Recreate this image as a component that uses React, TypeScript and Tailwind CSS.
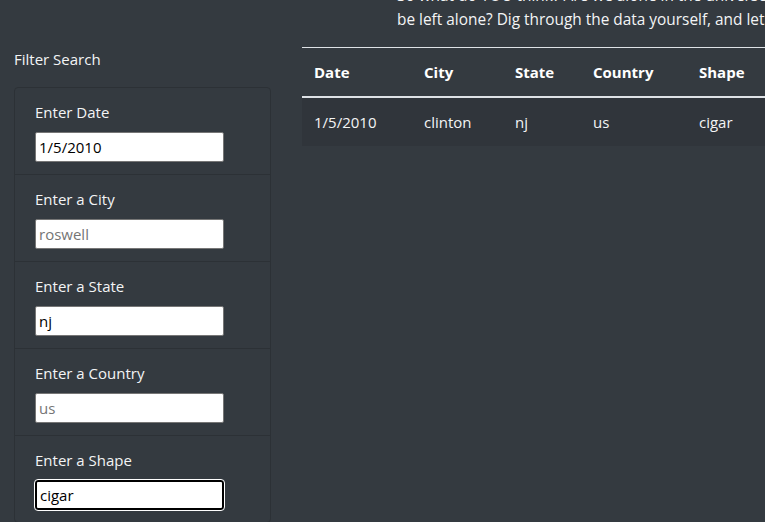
import React from "react";

const font = { fontFamily: '"Open Sans", "Noto Sans", sans-serif' };

type Field = { label: string; value?: string; placeholder?: string; focused?: boolean };

const fields: Field[] = [
  { label: "Enter Date", value: "1/5/2010" },
  { label: "Enter a City", placeholder: "roswell" },
  { label: "Enter a State", value: "nj" },
  { label: "Enter a Country", placeholder: "us" },
  { label: "Enter a Shape", value: "cigar", focused: true },
];

const cols = [
  { name: "Date", w: "w-[110px]", v: "1/5/2010" },
  { name: "City", w: "w-[91px]", v: "clinton" },
  { name: "State", w: "w-[78px]", v: "nj" },
  { name: "Country", w: "w-[106px]", v: "us" },
  { name: "Shape", w: "w-[200px]", v: "cigar" },
];

export default function App() {
  return (
    <div
      className="w-[765px] h-[522px] overflow-hidden bg-[#343a40] text-[#f3f4f5] text-[15px] leading-6 flex"
      style={font}
    >
      <div className="ml-[14px] w-[257px] shrink-0 pt-[47px]">
        <div className="mb-4">Filter Search</div>
        <div className="border border-[#2c3136] rounded-[4px]">
          {fields.map((f, i) => (
            <div
              key={f.label}
              className={`px-5 pt-3 pb-3 ${i < fields.length - 1 ? "border-b border-[#2c3136]" : ""}`}
            >
              <div className="mb-2">{f.label}</div>
              <input
                readOnly
                value={f.value ?? ""}
                placeholder={f.placeholder}
                className={`block w-[189px] h-[30px] bg-white text-black text-[15px] px-[3px] placeholder-[#757575] ${
                  f.focused
                    ? "border-2 border-black rounded-[3px] outline outline-1 outline-white"
                    : "border border-[#767676] rounded-[2px]"
                }`}
                style={font}
              />
            </div>
          ))}
        </div>
      </div>
      <div className="ml-[31px] shrink-0">
        <p className="-mt-[16px] pl-[95px] w-[700px] whitespace-nowrap text-[15.4px]">
          So what do YOU think? Are we alone in the universe? Or are we meant to
          <br />
          be left alone? Dig through the data yourself, and let us know what you think.
        </p>
        <table className="mt-[15px] border-collapse">
          <thead>
            <tr className="border-t border-[#dee2e6]">
              {cols.map((c) => (
                <th
                  key={c.name}
                  className={`${c.w} text-left font-bold px-3 py-3 border-b-2 border-[#dee2e6] text-white`}
                >
                  {c.name}
                </th>
              ))}
            </tr>
          </thead>
          <tbody>
            <tr className="bg-[#30353b]">
              {cols.map((c) => (
                <td key={c.name} className="px-3 py-3 h-[48px]">
                  {c.v}
                </td>
              ))}
            </tr>
          </tbody>
        </table>
      </div>
    </div>
  );
}
